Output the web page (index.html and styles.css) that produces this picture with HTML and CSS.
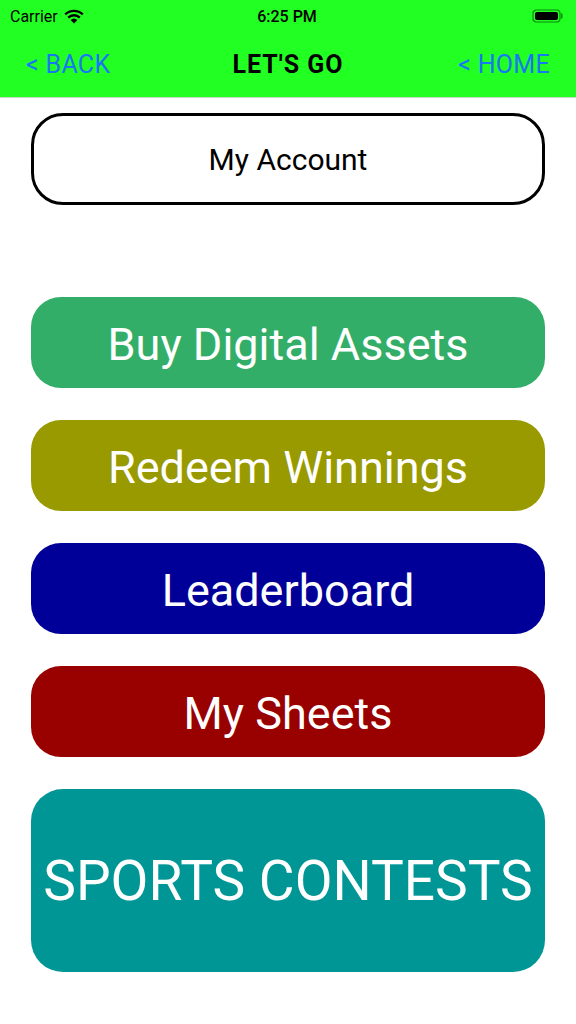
FILE: index.html
```html
<!DOCTYPE html>
<html lang="en">
<head>
    <meta charset="UTF-8">
    <meta name="viewport" content="width=device-width, initial-scale=1.0">
    <title>Let's Go</title>
    <link rel="stylesheet" href="styles.css">
</head>
<body>
    <div class="header">
        <div class="status">
            <div class="status-left">
                <span>Carrier</span>
                <svg class="wifi" width="20" height="15" viewBox="0 0 20 15">
                    <path d="M10 14.5 L6.6 11 A5 5 0 0 1 13.4 11 Z" fill="#000"/>
                    <path d="M4.2 8.6 A8.4 8.4 0 0 1 15.8 8.6" stroke="#000" stroke-width="2.4" fill="none"/>
                    <path d="M1.2 5.4 A12.8 12.8 0 0 1 18.8 5.4" stroke="#000" stroke-width="2.4" fill="none"/>
                </svg>
            </div>
            <div class="time">6:25 PM</div>
            <div class="status-right">
                <svg width="32" height="14" viewBox="0 0 32 14">
                    <rect x="1" y="1" width="27" height="12" rx="3.5" fill="none" stroke="#0a8a0a" stroke-width="1.2"/>
                    <rect x="3" y="3" width="23" height="8" rx="2" fill="#000"/>
                    <path d="M29.8 5 v4" stroke="#0a8a0a" stroke-width="1.4" stroke-linecap="round"/>
                </svg>
            </div>
        </div>
        <div class="nav">
            <a class="nav-link" href="#">&lt; BACK</a>
            <div class="nav-title">LET'S GO</div>
            <a class="nav-link right" href="#">&lt; HOME</a>
        </div>
    </div>

    <div class="content">
        <button class="btn account">My Account</button>
        <div class="menu">
            <button class="btn big green">Buy Digital Assets</button>
            <button class="btn big olive">Redeem Winnings</button>
            <button class="btn big navy">Leaderboard</button>
            <button class="btn big maroon">My Sheets</button>
            <button class="btn contests">SPORTS CONTESTS</button>
        </div>
    </div>
</body>
</html>
```

FILE: styles.css
```css
*{
    margin: 0;
    padding: 0;
    box-sizing: border-box;
}
body{
    width: 576px;
    height: 1024px;
    background: #fff;
    font-family: Roboto, "Noto Sans", sans-serif;
    overflow: hidden;
}
.header{
    background-color: #22ff22;
    height: 98px;
    border-bottom: 1px solid #c8d8c8;
}
.status{
    height: 32px;
    display: flex;
    align-items: center;
    justify-content: space-between;
    padding: 0 12px 0 10px;
    font-size: 16px;
    color: #000;
}
.status-left{
    display: flex;
    align-items: center;
    gap: 6px;
    width: 140px;
}
.time{
    font-weight: 500;
}
.status-right{
    width: 140px;
    display: flex;
    justify-content: flex-end;
}
.nav{
    height: 65px;
    display: flex;
    align-items: center;
    justify-content: space-between;
    padding: 0 26px 0 26px;
}
.nav-link{
    color: #1877f2;
    text-decoration: none;
    font-size: 25px;
    font-weight: 400;
    letter-spacing: 0.3px;
    width: 120px;
}
.nav-link.right{
    text-align: right;
}
.nav-title{
    font-size: 25px;
    font-weight: 700;
    letter-spacing: 1px;
    color: #000;
}
.content{
    padding: 15px 31px 0 31px;
}
.btn{
    display: block;
    width: 100%;
    border: none;
    font-family: inherit;
    color: #fff;
    cursor: pointer;
}
.account{
    height: 92px;
    background: #fff;
    border: 3px solid #000;
    border-radius: 32px;
    color: #000;
    font-size: 30px;
}
.menu{
    margin-top: 92px;
    display: flex;
    flex-direction: column;
    gap: 32px;
}
.big{
    height: 91px;
    border-radius: 30px;
    font-size: 45px;
    padding-top: 3px;
}
.green{
    background-color: #33ae68;
}
.olive{
    background-color: #999900;
}
.navy{
    background-color: #000099;
}
.maroon{
    background-color: #990000;
}
.contests{
    height: 183px;
    border-radius: 32px;
    background-color: #009695;
    font-size: 55px;
}
```
